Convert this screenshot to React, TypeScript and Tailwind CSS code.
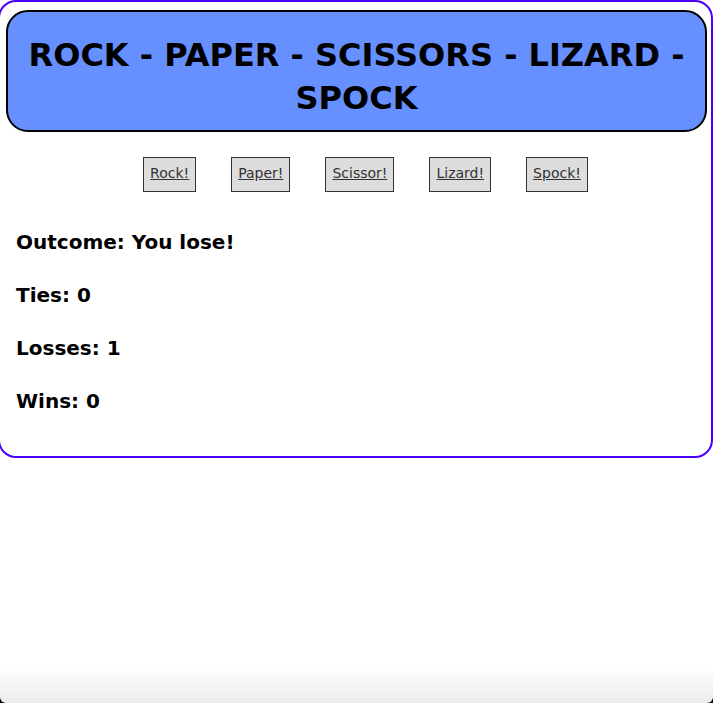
import React from "react";

const moves = ["Rock!", "Paper!", "Scissor!", "Lizard!", "Spock!"];

const App = () => {
  return (
    <div className="relative min-h-screen h-[703px] overflow-hidden bg-white font-['DejaVu_Sans',sans-serif]">
      {/* game card */}
      <div className="-ml-[2px] w-[715px] h-[458px] border-2 border-[#4a00ff] rounded-[18px] pt-[8px] pl-[6px] pr-[4px]">
        <div className="border-2 border-black rounded-[22px] bg-[#6690ff] pt-[22px] pb-[10px] px-4">
          <h1 className="text-center text-[32px] leading-[43px] font-bold text-black">
            ROCK - PAPER - SCISSORS - LIZARD - SPOCK
          </h1>
        </div>

        <div className="mt-[25px] flex justify-center gap-[35px] pl-[18px]">
          {moves.map((m) => (
            <button
              key={m}
              className="h-[35px] px-[6px] pb-[2px] bg-[#dddddd] border border-[#333] text-[14px] text-[#333] underline"
            >
              {m}
            </button>
          ))}
        </div>

        <div className="pt-[34px] pl-[10px] flex flex-col gap-[20px]">
          <h2 className="text-[20px] leading-[33px] font-bold text-black">Outcome: You lose!</h2>
          <h2 className="text-[20px] leading-[33px] font-bold text-black">Ties: 0</h2>
          <h2 className="text-[20px] leading-[33px] font-bold text-black">Losses: 1</h2>
          <h2 className="text-[20px] leading-[33px] font-bold text-black">Wins: 0</h2>
        </div>
      </div>

      {/* window bottom shading */}
      <div className="absolute bottom-0 inset-x-0 h-[36px] bg-black">
        <div className="h-full rounded-b-[6px] bg-gradient-to-b from-white to-[#ececec]" />
      </div>
    </div>
  );
};

export default App;
